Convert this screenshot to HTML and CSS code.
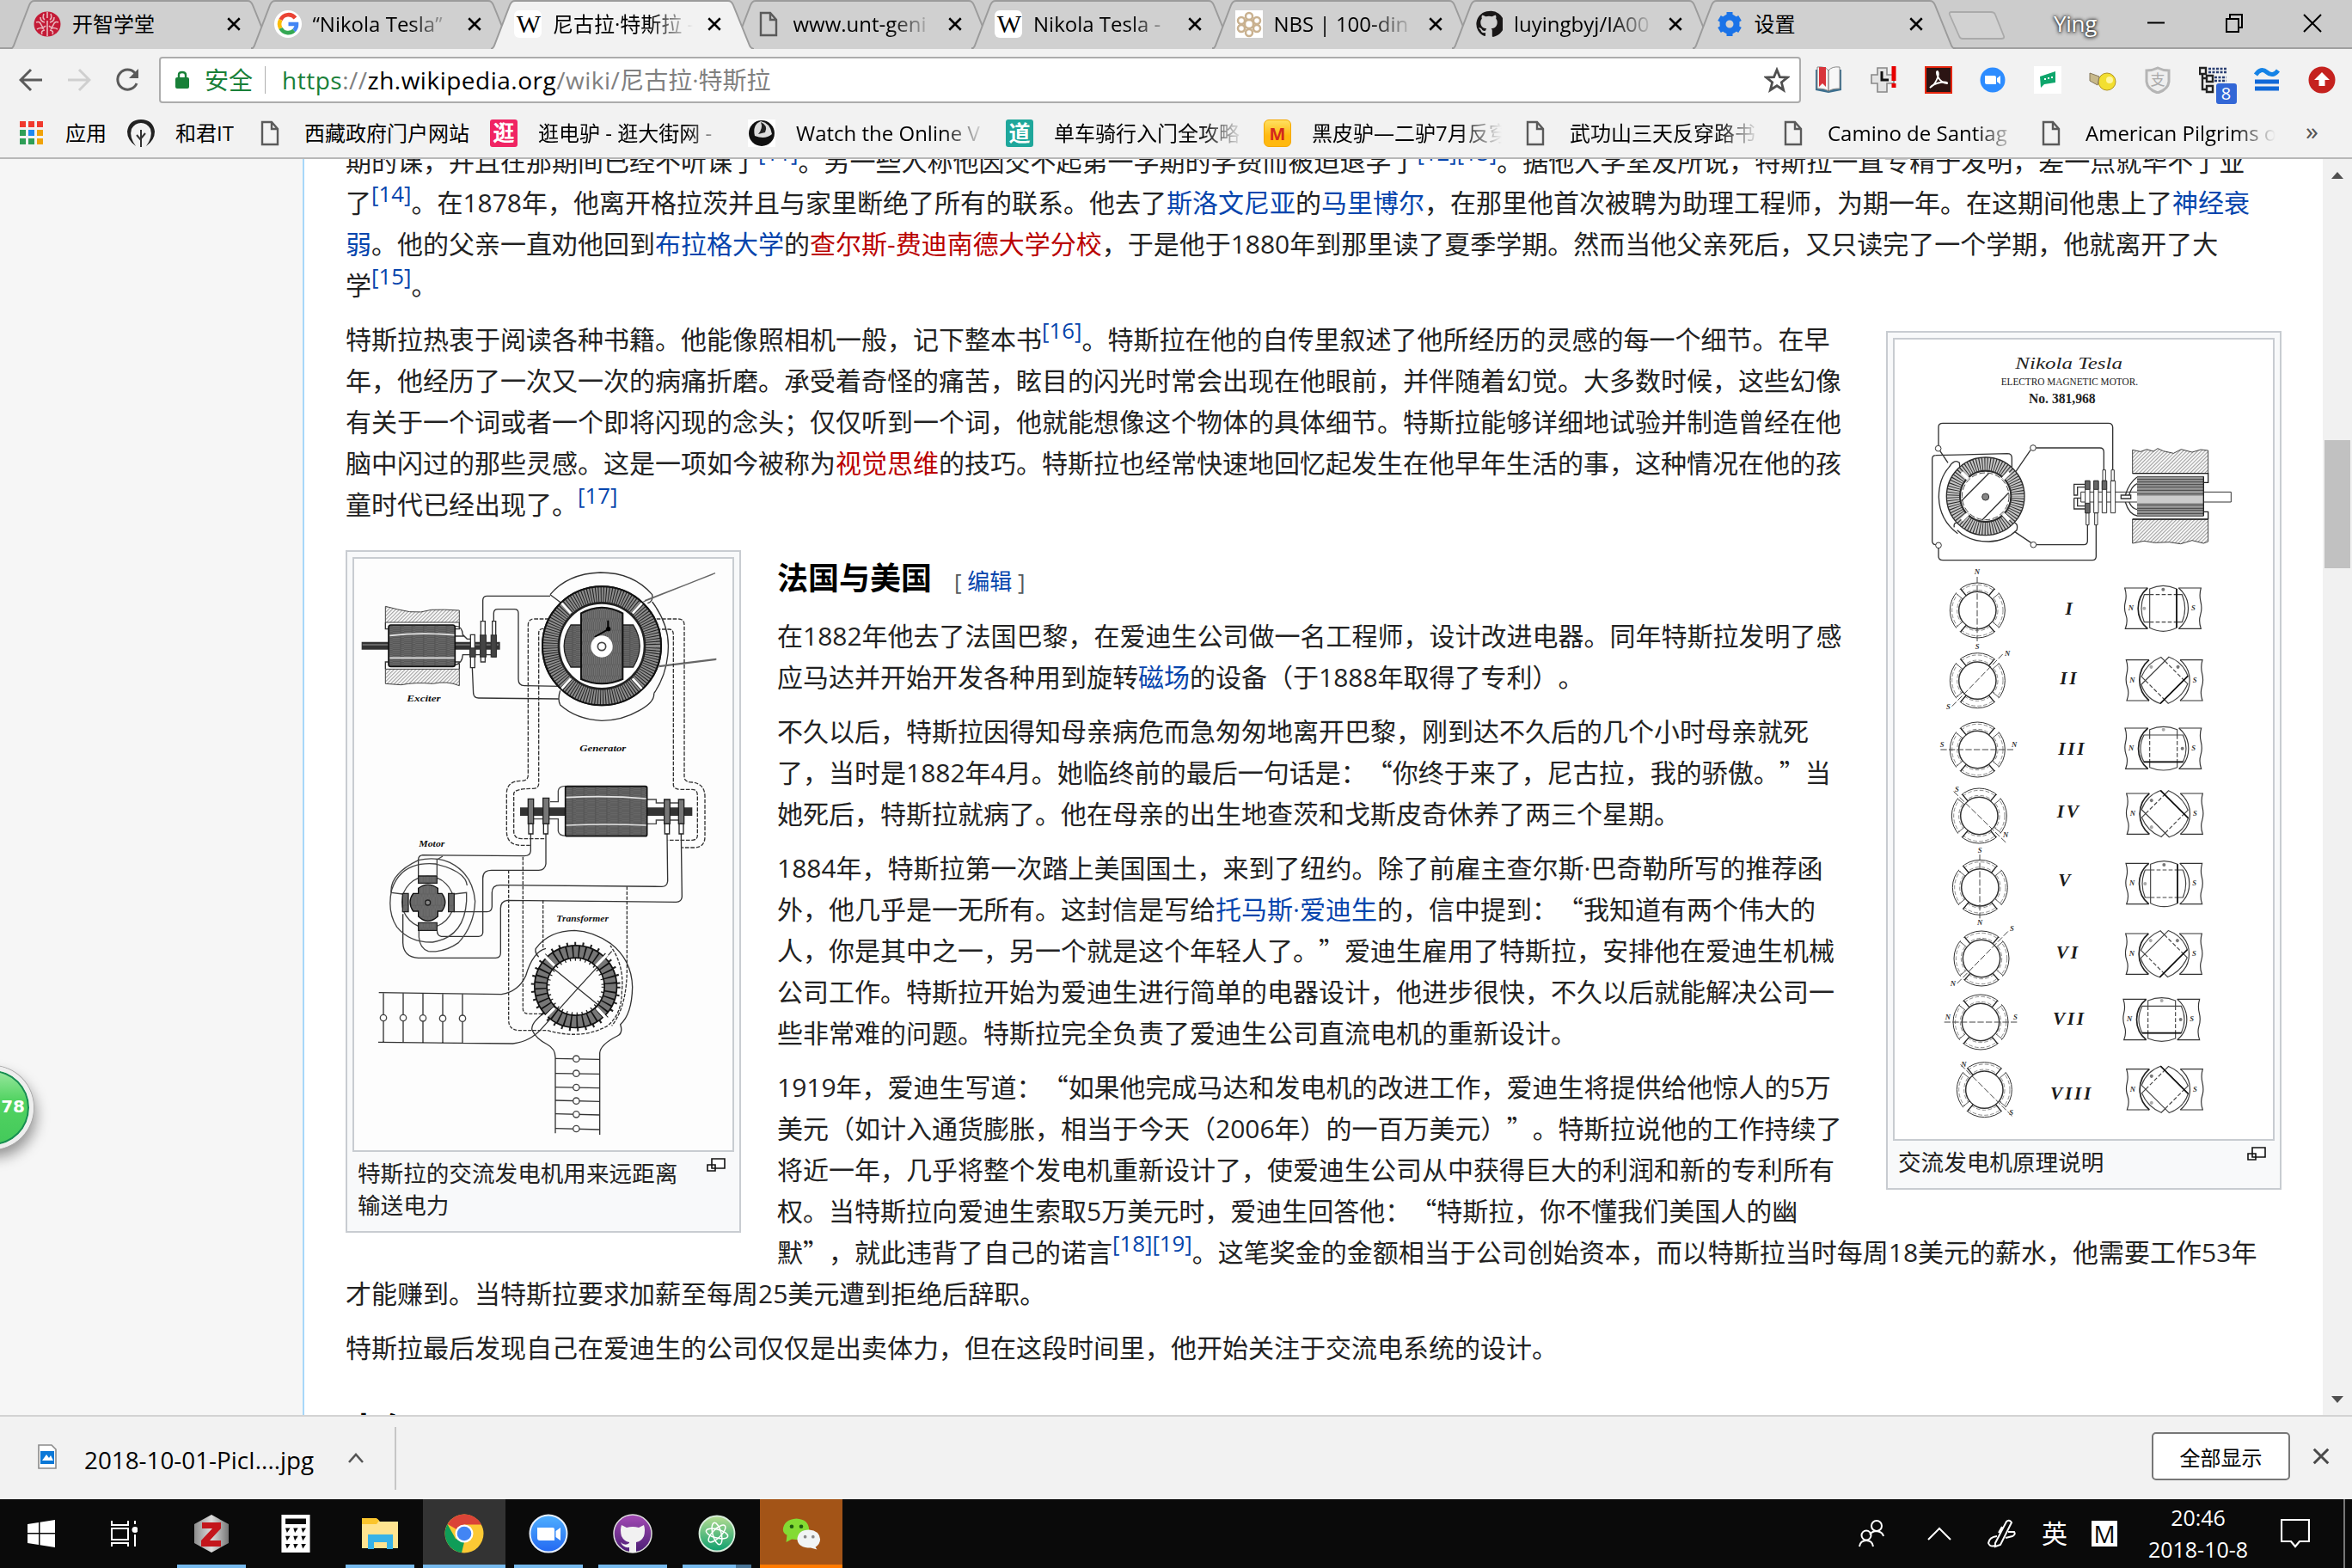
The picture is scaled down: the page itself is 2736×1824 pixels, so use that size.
FILE: index.html
```html
<!DOCTYPE html>
<html lang="zh-CN">
<head>
<meta charset="utf-8">
<title>尼古拉·特斯拉</title>
<link rel="stylesheet" href="styles.css">
</head>
<body>
<svg class="defs" width="0" height="0" aria-hidden="true">
  <defs>
    <symbol id="tab-shape" viewBox="0 0 306 57"><path d="M0 57Q3 56 4 53L22 6Q24 1 28 1H276Q280 1 282 6L301 53Q302 56 306 57" stroke="#9b9b9b" stroke-width="2"/></symbol>
    <symbol id="x" viewBox="0 0 16 16"><path d="M2 2L14 14M14 2L2 14" stroke="currentColor" stroke-width="2.2" fill="none"/></symbol>
    <symbol id="file" viewBox="0 0 32 32"><path d="M7 3H18L25 11V29H7ZM18 3V11H25" fill="none" stroke="#5a5a5a" stroke-width="2.4"/></symbol>
    <symbol id="magnify" viewBox="0 0 22 16"><path d="M6 1H21V12H6ZM1 8H10V15H1Z" fill="#fff" stroke="#111" stroke-width="1.6"/></symbol>
    <pattern id="hatch" width="9" height="9" patternUnits="userSpaceOnUse" patternTransform="rotate(45)"><rect width="9" height="9" fill="#fff"/><path d="M2 0V9" stroke="#555" stroke-width="2"/></pattern>
    <pattern id="grain" width="40" height="7" patternUnits="userSpaceOnUse"><rect width="40" height="7" fill="#555"/><path d="M0 2H26M30 5H40" stroke="#8b8b8b" stroke-width="1.6"/></pattern>
    <pattern id="grainv" width="7" height="40" patternUnits="userSpaceOnUse"><rect width="7" height="40" fill="#5c5c5c"/><path d="M2 0V28M5 30V40" stroke="#999" stroke-width="1.6"/></pattern>
    <linearGradient id="zg" x2="0" y2="1"><stop offset="0" stop-color="#4fb0ff"/><stop offset="1" stop-color="#2468f2"/></linearGradient>
    <linearGradient id="pg" x2="0" y2="1"><stop offset="0" stop-color="#a44bb5"/><stop offset="1" stop-color="#4a1d74"/></linearGradient>
    <linearGradient id="ag" x2="0" y2="1"><stop offset="0" stop-color="#b6dd92"/><stop offset="1" stop-color="#0d9f6e"/></linearGradient>
    <linearGradient id="silver"><stop offset="0" stop-color="#8c8c8c"/><stop offset=".5" stop-color="#ddd"/><stop offset="1" stop-color="#777"/></linearGradient>
    <symbol id="octocat" viewBox="0 0 32 32"><path d="M16 1a15 15 0 0 0-5 29c.9.1 1-.4 1-.9v-3c-4 1-5-1.600-5.200-2.400-.4-.9-1-1.800-1.800-2.300-.6-.4-1.400-1.100 0-1.100 1.400 0 2.300 1.200 2.700 1.800 1.500 2.500 3.700 1.900 4.500 1.400.1-1.100.6-1.800 1.100-2.300-3.500-.4-7-1.700-7-7.400 0-1.700.6-3 1.600-4.100-.2-.4-.7-2 .1-4 0 0 1.300-.4 4.200 1.500a14.500 14.500 0 0 1 7.600 0c2.900-1.900 4.200-1.500 4.200-1.500.8 2 .3 3.600.1 4 1 1.100 1.600 2.400 1.600 4.100 0 5.700-3.500 7-7 7.400.6.500 1.100 1.400 1.100 2.800v6.100c0 .5.200 1 1.100.9A15 15 0 0 0 16 1Z"/></symbol>
    <symbol id="ring" viewBox="-110 -110 220 220" overflow="visible">
      <g fill="none" stroke="#333" stroke-width="3"><circle r="96"/><circle r="65" stroke-width="4.500"/></g>
      <g fill="none" stroke="#777" stroke-width="2.500" stroke-dasharray="14 7"><circle r="89"/><circle r="71"/></g>
      <g stroke="#fff" stroke-width="16"><path d="M47 47L74 74M-47 47L-74 74M47-47L74-74M-47-47L-74-74"/></g>
      <g stroke="#222" stroke-width="4"><path d="M40 52L59 75M-40 52L-59 75M40-52L59-75M-40-52L-59-75"/></g>
      <g stroke="#555" stroke-width="3"><path d="M52 40L75 59M-52 40L-75 59M52-40L75-59M-52-40L-75-59"/></g>
    </symbol>
    <symbol id="poles" viewBox="-140 -90 280 180" overflow="visible">
      <g fill="none" stroke="#333" stroke-width="3.500"><path d="M-54-71H-134q8 24 2 48t2 46t-2 48H-54M54-71H132q-7 24-1 48t-1 46t2 48H54" /><path d="M-54-71A92 92 0 0 0-54 71" stroke="#222" stroke-width="5"/><path d="M54-71A92 92 0 0 1 54 71"/></g>
      <g class="italic"><text x="-122" y="7">N</text><text x="98" y="7">S</text></g>
    </symbol>
    <symbol id="rotor" viewBox="-90 -90 180 180" overflow="visible">
      <g fill="none" stroke="#444" stroke-width="3.500"><path d="M-47-68V68Q0 92 47 68V-68Q0-90-47-68Z"/><path d="M-47-48H-66Q-86 0-66 48H-47M47-48H66Q86 0 66 48H47"/><path d="M-47-48H47M-47 48H47" stroke-dasharray="14 7"/><path d="M47-68V68" stroke="#111" stroke-width="5"/></g><circle cy="-66" r="6" fill="#777"/><circle cx="-66" r="6" fill="#aaa"/>
    </symbol>
  </defs>
</svg>

<div class="screen">
  <header class="tabs">
    <div class="tab"><svg class="shape"><use href="#tab-shape"/></svg><svg class="fav" viewBox="0 0 32 32"><ellipse cx="16" cy="16" rx="15.500" ry="14.500" fill="#c41a36"/><path d="M16 2V9M16 12V30M12 4q-2 5 1 7M20 4q2 5-1 7M8 8q0 5 5 6M24 8q0 5-5 6M3 14q4-2 6 3t5 1M29 14q-4-2-6 3t-5 1M4 22q5-3 8 0M28 22q-5-3-8 0M10 28q-2-4 3-5M22 28q2-4-3-5" stroke="#e9b7bd" stroke-width="1.600" fill="none"/></svg><span class="label">开智学堂</span><svg class="close"><use href="#x"/></svg></div>
    <div class="tab"><svg class="shape"><use href="#tab-shape"/></svg><svg class="fav" viewBox="0 0 32 32"><circle cx="16" cy="16" r="16" fill="#fff"/><g fill="none" stroke-width="4.600"><path d="M24.500 9A10 10 0 0 0 7.500 11" stroke="#ea4335"/><path d="M7.500 11A10 10 0 0 0 7.500 21" stroke="#fbbc05"/><path d="M7.500 21A10 10 0 0 0 23 23.500" stroke="#34a853"/><path d="M23 23.500A10 10 0 0 0 26 16H16.500" stroke="#4285f4"/></g></svg><span class="label fade">“Nikola Tesla”</span><svg class="close"><use href="#x"/></svg></div>
    <div class="tab active"><svg class="shape"><use href="#tab-shape"/></svg><span class="fav wiki">W</span><span class="label fade">尼古拉·特斯拉 -</span><svg class="close"><use href="#x"/></svg></div>
    <div class="tab"><svg class="shape"><use href="#tab-shape"/></svg><svg class="fav"><use href="#file"/></svg><span class="label fade">www.unt-geni</span><svg class="close"><use href="#x"/></svg></div>
    <div class="tab"><svg class="shape"><use href="#tab-shape"/></svg><span class="fav wiki">W</span><span class="label fade">Nikola Tesla -</span><svg class="close"><use href="#x"/></svg></div>
    <div class="tab"><svg class="shape"><use href="#tab-shape"/></svg><svg class="fav" viewBox="0 0 32 32"><path d="M0 0H32V32H0Z" fill="#fff"/><g fill="none" stroke="#c9b18f" stroke-width="2.500"><circle cx="16" cy="7" r="4"/><circle cx="7" cy="12" r="4"/><circle cx="25" cy="12" r="4"/><circle cx="7" cy="21" r="4"/><circle cx="25" cy="21" r="4"/><circle cx="16" cy="16" r="5"/><circle cx="16" cy="26" r="4"/></g></svg><span class="label fade">NBS | 100-din</span><svg class="close"><use href="#x"/></svg></div>
    <div class="tab"><svg class="shape"><use href="#tab-shape"/></svg><svg class="fav" fill="#191717"><use href="#octocat"/></svg><span class="label fade">luyingbyj/IA00</span><svg class="close"><use href="#x"/></svg></div>
    <div class="tab"><svg class="shape"><use href="#tab-shape"/></svg><svg class="fav" viewBox="0 0 32 32"><circle cx="16" cy="16" r="8" fill="none" stroke="#1a73e8" stroke-width="7"/><path d="M16 2V8M16 24V30M4 9L9 12M23 20L28 23M4 23L9 20M23 12L28 9" stroke="#1a73e8" stroke-width="7"/></svg><span class="label">设置</span><svg class="close"><use href="#x"/></svg></div>
    <svg class="newtab" viewBox="0 0 68 34"><path d="M4 1H50Q54 1 55 4L65 29Q66 32 62 32H17Q14 32 13 29L2 4Q1 1 4 1Z" fill="#d2d2d2" stroke="#aaa" stroke-width="1.800"/></svg>
    <div class="window">
      <span class="profile">Ying</span>
      <svg viewBox="0 0 22 22"><path d="M1 10.500H21" /></svg>
      <svg viewBox="0 0 22 22"><path d="M2 6H16V21H2ZM6 6V1H20V16H16"/></svg>
      <svg viewBox="0 0 22 22"><path d="M1 1L21 21M21 1L1 21"/></svg>
    </div>
  </header>

  <div class="toolbar">
    <nav class="nav">
      <svg viewBox="0 0 28 28"><path d="M27 14H3M14 2L2 14L14 26" stroke="#5a5a5a"/></svg>
      <svg viewBox="0 0 28 28"><path d="M1 14H25M14 2L26 14L14 26" stroke="#cfcfcf"/></svg>
      <svg viewBox="0 0 28 28"><path d="M23 6A11.500 11.500 0 1 0 25 18" stroke="#5a5a5a"/><path d="M27 1V12H16Z" fill="#5a5a5a"/></svg>
    </nav>
    <div class="omnibox">
      <svg class="lock" viewBox="0 0 16 22"><path d="M4 9V5Q4 2 8 2T12 5V9" fill="none" stroke="#188038" stroke-width="2.400"/><rect y="8" width="16" height="13" rx="2" fill="#188038"/></svg>
      <span class="secure">安全</span>
      <span class="url"><b>https</b>://<i>zh.wikipedia.org</i>/wiki/<span>尼古拉·特斯拉</span></span>
      <svg class="star" viewBox="0 0 28 28"><path d="M14 3L17.200 10.800L25.500 11.300L19 16.600L21.200 25L14 20.300L6.800 25L9 16.600L2.500 11.300L10.800 10.800Z" fill="none" stroke="#4f4f4f" stroke-width="2.600"/></svg>
    </div>
    <div class="exts">
      <svg viewBox="0 0 32 32"><path d="M1 4V28L16 31L31 28V4Z" fill="#3c6f8e"/><path d="M3 1Q12 0 16 5Q20 0 29 1V26Q20 26 16 29Q12 26 3 26Z" fill="#f7f7f7" stroke="#888"/><path d="M5 1H13V24L9 20L5 24Z" fill="#d8343b"/><path d="M16 5V29" stroke="#555"/></svg>
      <svg viewBox="0 0 32 32"><path d="M9 2H20V10H28V20H20V30H9V20H2V10H9Z" fill="#e4e4e4" stroke="#888" stroke-width="1.600"/><path d="M14 6V16H22" stroke="#111" stroke-width="3" fill="none"/><path d="M28 0V17M28 20V25" stroke="#e60000" stroke-width="5"/></svg>
      <svg viewBox="0 0 32 32"><path d="M1 1H31V31H1Z" fill="#2b1413" stroke="#e6250d" stroke-width="2"/><path d="M6 25C12 22 18 10 15 6C12 5 15 19 26 20C28 17 12 18 6 25Z" fill="none" stroke="#fff" stroke-width="1.800"/></svg>
      <svg viewBox="0 0 32 32"><circle cx="16" cy="16" r="14.500" fill="#2d8cff"/><path d="M7 11H18Q20 11 20 13V21H9Q7 21 7 19ZM21 14L25 11V21L21 18Z" fill="#fff"/></svg>
      <svg viewBox="0 0 32 32"><path d="M0 0H32V32H0Z" fill="#fff"/><path d="M7 12L25 6V19L12 21L8 25Z" fill="#0fa66c"/><path d="M12 15h2M16 14h2M20 13h2" stroke="#fff" stroke-width="2"/></svg>
      <svg viewBox="0 0 32 32"><circle cx="21" cy="18" r="10" fill="#f3df30" stroke="#b29522"/><path d="M1 8L12 12L10 22L1 17Z" fill="#c8b98a" stroke="#85775a"/><circle cx="24" cy="16" r="4" fill="#fff6a0"/></svg>
      <svg viewBox="0 0 32 32"><path d="M16 2Q22 5 29 5V18Q28 27 16 31Q4 27 3 18V5Q10 5 16 2Z" fill="#eee" stroke="#b5b5b5" stroke-width="3"/><text x="16" y="22" class="shield">支</text></svg>
      <div class="tree"><svg viewBox="0 0 32 32"><path d="M1 2H8V9H1ZM9 11H16V18H9ZM9 23H16V30H9ZM4 9V27H9M4 14H9" fill="none" stroke="#222" stroke-width="2.400"/><path d="M11 3H32M11 7H32M18 13H32M18 17H32" stroke="#2a3f72" stroke-width="2.600" stroke-dasharray="3 1.500"/></svg><span>8</span></div>
      <svg viewBox="0 0 32 32"><path d="M3 10Q9 1 16 7T29 5" fill="none" stroke="#1583e6" stroke-width="5"/><path d="M2 18H30M2 26H30" stroke="#1069d8" stroke-width="5"/></svg>
      <svg viewBox="0 0 32 32"><circle cx="16" cy="16" r="15.500" fill="#c5221f"/><path d="M16 7L25 16H19.500V23H12.500V16H7Z" fill="#fff"/></svg>
    </div>
  </div>

  <div class="bookmarks">
    <div class="bm apps"><svg viewBox="0 0 27 27"><path d="M0 0h7v7h-7zM10 0h7v7h-7zM20 0h7v7h-7z" fill="#f03a2e"/><path d="M0 10h7v7h-7zM0 20h7v7h-7zM10 20h7v7h-7z" fill="#2e9e56"/><path d="M10 10h7v7h-7z" fill="#1e88f0"/><path d="M20 10h7v7h-7zM20 20h7v7h-7z" fill="#f0a30a"/></svg><span>应用</span></div>
    <div class="bm short"><svg viewBox="0 0 32 32"><path d="M10 31Q0 24 0 14Q2 0 16 0T32 14Q32 24 22 31Q30 20 27 11Q23 4 16 4T5 11Q2 20 10 31Z" fill="#222"/><path d="M16 12V32M16 24L11 18M16 22L21 16" stroke="#333" stroke-width="2"/></svg><span>和君IT</span></div>
    <div class="bm mid"><svg><use href="#file"/></svg><span>西藏政府门户网站</span></div>
    <div class="bm"><span class="sq pink">逛</span><span class="fade">逛电驴 - 逛大街网 -</span></div>
    <div class="bm"><svg viewBox="0 0 32 32"><path d="M0 0H32V32H0Z" fill="#fff"/><circle cx="16" cy="16" r="15" fill="#111"/><path d="M8 19Q5 6 15 2Q26 4 28 17Q20 24 8 19Z" fill="#ddd"/><path d="M15 3Q24 7 20 15L12 17Q18 10 15 3" fill="#222"/></svg><span class="fade">Watch the Online V</span></div>
    <div class="bm"><span class="sq teal">道</span><span class="fade">单车骑行入门全攻略</span></div>
    <div class="bm"><span class="sq gold">M</span><span class="fade">黑皮驴—二驴7月反穿</span></div>
    <div class="bm"><svg><use href="#file"/></svg><span class="fade">武功山三天反穿路书</span></div>
    <div class="bm"><svg><use href="#file"/></svg><span class="fade">Camino de Santiag</span></div>
    <div class="bm last"><svg><use href="#file"/></svg><span class="fade">American Pilgrims o</span></div>
    <span class="more">»</span>
  </div>

  <main class="viewport">
    <aside class="margin"></aside>
    <article class="article">
      <p>期的课，并且在那期间已经不听课了<sup>[11]</sup>。另一些人称他因交不起第一学期的学费而被迫退学了<sup>[12][13]</sup>。据他大学室友所说，特斯拉一直专精于发明，差一点就毕不了业<br>了<sup>[14]</sup>。在1878年，他离开格拉茨并且与家里断绝了所有的联系。他去了<a>斯洛文尼亚</a>的<a>马里博尔</a>，在那里他首次被聘为助理工程师，为期一年。在这期间他患上了<a>神经衰<br>弱</a>。他的父亲一直劝他回到<a>布拉格大学</a>的<a class="new">查尔斯-费迪南德大学分校</a>，于是他于1880年到那里读了夏季学期。然而当他父亲死后，又只读完了一个学期，他就离开了大<br>学<sup>[15]</sup>。</p>
      <figure class="thumb right">
        <svg class="plate motor" viewBox="72 75 1320 2790">
          <g fill="#222" font-family="Liberation Serif, serif">
            <text x="493" y="176" font-size="56" font-style="italic" textLength="374" lengthAdjust="spacingAndGlyphs">Nikola Tesla</text>
            <text x="443" y="235" font-size="38" textLength="478" lengthAdjust="spacingAndGlyphs">ELECTRO MAGNETIC MOTOR.</text>
            <text x="540" y="297" font-size="48" font-weight="bold" textLength="233" lengthAdjust="spacingAndGlyphs">No. 381,968</text>
          </g>
          <g fill="none" stroke="#333" stroke-width="4">
            <path d="M225 445V380Q225 367 240 367H818Q833 367 833 382V530M565 453H788Q802 453 802 468V530M567 791H732Q745 791 745 778V720M225 803V832Q225 845 240 845H762Q775 845 775 832V720M216 791Q203 791 203 778V492Q203 479 216 479L465 473Q481 473 481 488V520M230 463L258 505M546 461L495 535M548 784L490 745"/>
            <path d="M262 520Q226 560 226 625Q228 705 292 752M290 740Q330 780 400 780Q460 778 498 740Q505 715 484 712M262 520Q280 490 298 505L300 530M280 730Q276 712 295 714"/>
            <g fill="#fff" stroke-width="3"><circle cx="224" cy="455" r="10"/><circle cx="555" cy="453" r="10"/><circle cx="225" cy="793" r="10"/><circle cx="556" cy="791" r="10"/></g>
          </g>
          <circle cx="389" cy="622" r="112" fill="#fff" stroke="#2c2c2c" stroke-width="52"/><circle cx="389" cy="622" r="113" fill="none" stroke="#c4c4c4" stroke-width="42" stroke-dasharray="6 3"/>
          <path d="M306 539L328 561M472 539L450 561M306 705L328 683M472 705L450 683" stroke="#fff" stroke-width="12"/>
          <circle cx="389" cy="622" r="82" fill="none" stroke="#444" stroke-width="3" stroke-dasharray="20 8"/>
          <path d="M305 638L400 542M378 704L470 610" stroke="#333" stroke-width="4"/><circle cx="389" cy="624" r="12" fill="#888" stroke="#333" stroke-width="3"/>
          <path d="M902 460L930 466L952 458L975 465L990 455L1010 464L1045 472L1072 458L1110 468L1140 459L1166 462V542H902ZM902 702H1166V780L1150 786L1110 776L1070 788L1030 782L980 784L942 778L902 786Z" fill="url(#hatch)" stroke="#444" stroke-width="3"/>
          <path d="M902 702H1166M902 542H1166V574H1148M1148 676H1166V702" fill="none" stroke="#222" stroke-width="4"/>
          <path d="M722 607H1246V642H722Z" fill="#fff" stroke="#333" stroke-width="3"/>
          <path d="M918 553H1150V691H918Z" fill="#969696"/><path d="M918 553H1150M918 563H1150M918 572H1150M918 581H1150M918 590H1150M918 601H1150M918 614H1150M918 652H1150M918 664H1150M918 671H1150M918 682H1150M918 691H1150" stroke="#444" stroke-width="3"/><path d="M918 620H1150V646H918Z" fill="#ccc"/><path d="M1150 553V691" stroke="#222" stroke-width="4"/>
          <path d="M918 555Q890 575 877 618H890Q900 585 918 578M877 642Q890 685 918 690M890 642Q900 665 918 668M862 618H896V630H862ZM750 580H698V618H710V590H750M698 628V666H742M710 628V656H742M698 628H722" fill="none" stroke="#333" stroke-width="4"/>
          <g fill="#fff" stroke="#333" stroke-width="3"><path d="M737 568H753V680H737ZM767 568H783V680H767ZM796 568H812V680H796ZM826 568H842V680H826ZM798 530H808V568H798ZM828 530H838V568H828ZM740 680H750V722H740ZM770 680H780V722H770Z"/><path d="M737 568H753V598H737ZM767 568H783V598H767ZM796 568H812V598H796ZM737 646H753V680H737Z" fill="#666"/></g>

          <g><use href="#ring" x="251" y="910" width="220" height="220"/><use href="#ring" x="251" y="1155" width="220" height="220"/><use href="#ring" x="251" y="1396" width="220" height="220"/><use href="#ring" x="257" y="1627" width="220" height="220"/><use href="#ring" x="260" y="1877" width="220" height="220"/><use href="#ring" x="265" y="2125" width="220" height="220"/><use href="#ring" x="262" y="2347" width="220" height="220"/><use href="#ring" x="275" y="2583" width="220" height="220"/></g>
          <path d="M360 903V1130M272 1355L450 1172M232 1506H492M278 1652L462 1832M369 1872V2095M290 2322L468 2140M245 2457H500M302 2605L482 2785" stroke="#444" stroke-width="3" stroke-dasharray="22 7"/>
          <g class="italic"><text x="350" y="893">N</text><text x="353" y="1155">S</text><text x="456" y="1180">N</text><text x="252" y="1366">S</text><text x="230" y="1497">S</text><text x="480" y="1497">N</text><text x="282" y="1653">S</text><text x="450" y="1812">N</text><text x="362" y="1866">S</text><text x="360" y="2118">N</text><text x="474" y="2140">S</text><text x="266" y="2330">N</text><text x="248" y="2449">N</text><text x="486" y="2449">S</text><text x="304" y="2612">N</text><text x="472" y="2780">S</text></g>
          <g class="roman"><text x="684" y="1035">I</text><text x="682" y="1277">II</text><text x="692" y="1524">III</text><text x="680" y="1744">IV</text><text x="668" y="1984">V</text><text x="677" y="2234">VI</text><text x="682" y="2465">VII</text><text x="690" y="2726">VIII</text></g>
          <g><use href="#poles" x="869" y="923" width="280" height="180"/><use href="#poles" x="874" y="1174" width="280" height="180"/><use href="#poles" x="870" y="1412" width="280" height="180"/><use href="#poles" x="875" y="1640" width="280" height="180"/><use href="#poles" x="873" y="1884" width="280" height="180"/><use href="#poles" x="872" y="2129" width="280" height="180"/><use href="#poles" x="864" y="2358" width="280" height="180"/><use href="#poles" x="875" y="2602" width="280" height="180"/></g>
          <g><use href="#rotor" x="919" y="923" width="180" height="180"/><g transform="translate(1014 1264) rotate(45)"><use href="#rotor" x="-90" y="-90" width="180" height="180"/></g><g transform="translate(1010 1502) rotate(90)"><use href="#rotor" x="-90" y="-90" width="180" height="180"/></g><g transform="translate(1015 1730) rotate(-45)"><use href="#rotor" x="-90" y="-90" width="180" height="180"/></g><use href="#rotor" x="922" y="1884" width="180" height="180"/><g transform="translate(1012 2219) rotate(45)"><use href="#rotor" x="-90" y="-90" width="180" height="180"/></g><g transform="translate(1004 2448) rotate(90)"><use href="#rotor" x="-90" y="-90" width="180" height="180"/></g><g transform="translate(1015 2692) rotate(-45)"><use href="#rotor" x="-90" y="-90" width="180" height="180"/></g></g>
        </svg>
        <figcaption><span>交流发电机原理说明</span><svg><use href="#magnify"/></svg></figcaption>
      </figure>
      <p>特斯拉热衷于阅读各种书籍。他能像照相机一般，记下整本书<sup>[16]</sup>。特斯拉在他的自传里叙述了他所经历的灵感的每一个细节。在早<br>年，他经历了一次又一次的病痛折磨。承受着奇怪的痛苦，眩目的闪光时常会出现在他眼前，并伴随着幻觉。大多数时候，这些幻像<br>有关于一个词或者一个即将闪现的念头；仅仅听到一个词，他就能想像这个物体的具体细节。特斯拉能够详细地试验并制造曾经在他<br>脑中闪过的那些灵感。这是一项如今被称为<a class="new">视觉思维</a>的技巧。特斯拉也经常快速地回忆起发生在他早年生活的事，这种情况在他的孩<br>童时代已经出现了。<sup>[17]</sup></p>
      <figure class="thumb left">
        <svg class="plate system" viewBox="66 60 1320 2064">
          <g fill="none" stroke="#333" stroke-width="4">
            <path d="M515 280V205Q515 190 530 190H750M553 280V250Q553 236 568 236H625Q639 236 639 250V480Q639 503 660 503L790 505M478 438L482 530Q484 546 500 546L780 549M750 185Q810 112 925 108Q1040 108 1106 185Q1110 210 1090 215M750 185L790 215M1106 210Q1165 290 1162 370Q1160 460 1112 530M1112 530Q1115 560 1060 590Q1000 625 930 625Q840 620 785 570Q775 550 785 520"/>
            <path d="M1075 210L1326 110M1080 206L1318 114M1130 434L1330 409M1130 437L1330 412" stroke="#666"/>
            <path d="M860 270H695Q673 270 673 292V815Q673 835 650 835Q598 835 598 880V1010Q598 1060 650 1060H680M860 304H725Q710 304 710 320V845Q710 862 690 862Q623 862 623 880V1010Q623 1037 650 1037H735M950 270H1195Q1218 270 1218 290V825Q1222 840 1245 840Q1290 845 1290 890V1030Q1290 1068 1250 1068H1210M950 306H1165Q1180 306 1180 325V850Q1182 865 1205 865H1245Q1264 865 1264 885V1025Q1264 1042 1245 1042H1160" stroke-dasharray="14 5"/>
            <path d="M682 1020V1080Q680 1097 660 1097L305 1094Q290 1096 290 1110V1170M735 1020V1125Q732 1147 710 1147H545Q515 1147 515 1175V1365Q513 1378 500 1378H370Q355 1375 355 1355M1158 1020L1160 1185Q1158 1204 1140 1204L575 1199Q547 1199 547 1225V1275Q545 1292 530 1292H415M1207 1020L1210 1240Q1208 1257 1190 1258L600 1252Q577 1255 577 1280V1435Q577 1453 560 1453H290Q238 1450 236 1400V1300"/>
            <path d="M605 1147V1670Q605 1706 645 1706H740Q860 1740 950 1690Q1000 1650 1000 1570Q1010 1480 960 1410M655 1100V1630Q655 1648 675 1648H720M725 1252V1420M1018 1204V1480Q1020 1620 965 1690" stroke-dasharray="12 5"/>
          </g>
          <path d="M175 226Q220 238 260 245Q300 250 335 238Q380 236 433 240V282H175ZM175 445H433V503Q390 485 340 496Q280 490 230 500L175 496Z" fill="url(#hatch)" stroke="#444" stroke-width="3"/>
          <path d="M175 282V305H185M433 282V305H420M175 445V420H185M433 445V420H420M420 295Q443 295 445 325L460 340H475M420 430Q443 425 445 395H560M420 330H450" fill="none" stroke="#333" stroke-width="4"/>
          <path d="M92 350H575V377H92Z" fill="#333"/><path d="M95 360H570" stroke="#999" stroke-width="3"/>
          <rect x="186" y="291" width="232" height="145" rx="8" fill="url(#grain)" stroke="#111" stroke-width="5"/><path d="M190 328Q300 316 415 326M190 406H415" stroke="#e5e5e5" stroke-width="5" fill="none"/>
          <g fill="#fff" stroke="#333" stroke-width="4"><path d="M472 325H487V440H472ZM508 278H523V420H508ZM548 278H560V402H548Z"/><path d="M470 372H489V402H470ZM506 327H526V402H506ZM544 327H562V402H544Z" fill="#444"/></g>
          <circle cx="930" cy="364" r="178" fill="#fff" stroke="#222" stroke-width="64"/><circle cx="930" cy="364" r="180" fill="none" stroke="#8c8c8c" stroke-width="52" stroke-dasharray="6 3"/><circle cx="930" cy="364" r="207" fill="none" stroke="#111" stroke-width="6"/>
          <path d="M790 215L822 250M1070 215L1038 250M790 513L822 478M1070 513L1038 478" stroke="#fff" stroke-width="8"/>
          <path d="M822 291H1040Q1085 364 1040 438H822Q775 364 822 291Z" fill="url(#grain)" stroke="#222" stroke-width="4"/>
          <path d="M858 250Q930 210 1003 250V480Q930 512 858 480Z" fill="url(#grainv)" stroke="#111" stroke-width="6"/>
          <path d="M905 333L955 305M952 275V305" stroke="#000" stroke-width="6"/><circle cx="953" cy="305" r="8"/><circle cx="930" cy="366" r="38" fill="#fff"/><circle cx="930" cy="366" r="14" fill="#fff" stroke="#444" stroke-width="5"/>
          <path d="M645 928H1246V957H645Z" fill="#333"/><path d="M750 908H778V870Q780 853 805 853M690 968H778V1010Q780 1027 805 1027M1088 900H1120V912H1200M1088 985H1120V972H1200" fill="none" stroke="#444" stroke-width="4"/>
          <rect x="803" y="854" width="285" height="174" rx="6" fill="url(#grain)" stroke="#111" stroke-width="5"/><path d="M806 893Q950 885 1085 897M806 990Q950 984 1085 990" stroke="#e5e5e5" stroke-width="5" fill="none"/>
          <g fill="#777" stroke="#222" stroke-width="4"><path d="M673 898H692V985H673ZM725 895H746V985H725ZM1148 900H1168V985H1148ZM1198 900H1217V985H1198Z"/><path d="M675 985H690V1020H675ZM727 985H742V1020H727ZM1150 985H1166V1020H1150ZM1200 985H1215V1020H1200Z" fill="#fff"/></g>
          <g fill="none" stroke="#444" stroke-width="4"><circle cx="323" cy="1258" r="90"/><path d="M195 1225Q190 1160 290 1112Q350 1098 400 1120Q480 1160 488 1255Q485 1340 430 1400Q380 1435 325 1430Q295 1420 292 1380V1340M195 1225L235 1230"/><path d="M460 1200Q455 1150 350 1125Q230 1115 197 1215Q180 1290 215 1345Q260 1400 340 1398Q450 1380 458 1255V1225L415 1230"/><path d="M355 1165V1110L375 1098"/></g>
          <path d="M290 1167H355V1192H290ZM290 1330H355V1357H290ZM235 1228H255V1292H235ZM395 1228H415V1292H395Z" fill="url(#grainv)" stroke="#222" stroke-width="4"/>
          <path d="M290 1210Q323 1185 358 1210V1228H372Q395 1258 372 1290H358V1308Q323 1340 290 1308V1290H272Q250 1258 272 1228H290Z" fill="url(#grainv)" stroke="#111" stroke-width="4"/><circle cx="323" cy="1260" r="9" fill="#888" stroke="#222" stroke-width="4"/>
          <g fill="none" stroke="#333" stroke-width="4"><path d="M152 1574L580 1580Q640 1570 665 1515Q690 1430 735 1420M150 1747L620 1752Q680 1745 720 1700L850 1555L965 1430M168 1575V1747M237 1575V1747M306 1578V1750M375 1578V1750M444 1580V1750M700 1420Q745 1358 835 1357Q900 1360 960 1402Q1035 1460 1037 1555Q1035 1650 995 1685Q1005 1715 985 1725Q925 1755 923 1785V2070M700 1420Q695 1435 710 1450M735 1640Q680 1680 687 1705Q700 1735 740 1755Q768 1770 768 1800V2065M755 1485L940 1635"/><path d="M768 1804L923 1807M768 1856L923 1858M768 1904L923 1907M768 1950L923 1954M768 1997L923 2001M768 2048L923 2052"/></g>
          <g fill="#fff" stroke="#444" stroke-width="4"><circle cx="168" cy="1662" r="11"/><circle cx="237" cy="1662" r="11"/><circle cx="306" cy="1663" r="11"/><circle cx="375" cy="1664" r="11"/><circle cx="444" cy="1664" r="11"/><circle cx="841" cy="1805" r="11"/><circle cx="841" cy="1856" r="11"/><circle cx="841" cy="1905" r="11"/><circle cx="841" cy="1952" r="11"/><circle cx="841" cy="1999" r="11"/><circle cx="841" cy="2049" r="11"/></g>
          <g fill="none"><circle cx="839" cy="1553" r="123" stroke="#222" stroke-width="66" stroke-dasharray="5 18"/><circle cx="839" cy="1553" r="122" stroke="#111" stroke-width="48"/><circle cx="839" cy="1553" r="122" stroke="#777" stroke-width="38" stroke-dasharray="16 5"/></g>
          <path d="M725 1440L765 1480M950 1440L910 1480M725 1668L765 1628M950 1668L912 1628" stroke="#fff" stroke-width="10"/>
          <g fill="#111" font-family="Liberation Serif, serif" font-style="italic" font-weight="bold" font-size="34"><text x="250" y="557" textLength="118" lengthAdjust="spacingAndGlyphs">Exciter</text><text x="853" y="733" textLength="162" lengthAdjust="spacingAndGlyphs">Generator</text><text x="292" y="1064" textLength="90" lengthAdjust="spacingAndGlyphs">Motor</text><text x="772" y="1325" textLength="182" lengthAdjust="spacingAndGlyphs">Transformer</text></g>
        </svg>
        <figcaption><span>特斯拉的交流发电机用来远距离<br>输送电力</span><svg><use href="#magnify"/></svg></figcaption>
      </figure>
      <h3>法国与美国<span class="edit">[ <a>编辑</a> ]</span></h3>
      <p>在1882年他去了法国巴黎，在爱迪生公司做一名工程师，设计改进电器。同年特斯拉发明了感<br>应马达并开始开发各种用到旋转<a>磁场</a>的设备（于1888年取得了专利）。</p>
      <p>不久以后，特斯拉因得知母亲病危而急匆匆地离开巴黎，刚到达不久后的几个小时母亲就死<br>了，当时是1882年4月。她临终前的最后一句话是：<q>“</q>你终于来了，尼古拉，我的骄傲。<q>”</q>当<br>她死后，特斯拉就病了。他在母亲的出生地查茨和戈斯皮奇休养了两三个星期。</p>
      <p>1884年，特斯拉第一次踏上美国国土，来到了纽约。除了前雇主查尔斯·巴奇勒所写的推荐函<br>外，他几乎是一无所有。这封信是写给<a>托马斯·爱迪生</a>的，信中提到：<q>“</q>我知道有两个伟大的<br>人，你是其中之一，另一个就是这个年轻人了。<q>”</q>爱迪生雇用了特斯拉，安排他在爱迪生机械<br>公司工作。特斯拉开始为爱迪生进行简单的电器设计，他进步很快，不久以后就能解决公司一<br>些非常难的问题。特斯拉完全负责了爱迪生公司直流电机的重新设计。</p>
      <p>1919年，爱迪生写道：<q>“</q>如果他完成马达和发电机的改进工作，爱迪生将提供给他惊人的5万<br>美元（如计入通货膨胀，相当于今天（2006年）的一百万美元）<q>”</q>。特斯拉说他的工作持续了<br>将近一年，几乎将整个发电机重新设计了，使爱迪生公司从中获得巨大的利润和新的专利所有<br>权。当特斯拉向爱迪生索取5万美元时，爱迪生回答他：<q>“</q>特斯拉，你不懂我们美国人的幽<br>默<q>”</q>，就此违背了自己的诺言<sup>[18][19]</sup>。这笔奖金的金额相当于公司创始资本，而以特斯拉当时每周18美元的薪水，他需要工作53年<br>才能赚到。当特斯拉要求加薪至每周25美元遭到拒绝后辞职。</p>
      <p>特斯拉最后发现自己在爱迪生的公司仅仅是出卖体力，但在这段时间里，他开始关注于交流电系统的设计。</p>
      <h3 class="next">中年</h3>
    </article>
    <div class="scroll"><svg viewBox="0 0 14 8"><path d="M0 8L7 0L14 8Z"/></svg><div class="thumbbar"></div><svg viewBox="0 0 14 8"><path d="M0 0L7 8L14 0Z"/></svg></div>
    <div class="ball">78</div>
  </main>

  <div class="shelf">
    <div class="download"><svg class="doc" viewBox="0 0 22 29"><path d="M1 1H16L21 6V28H1Z" fill="#fff" stroke="#8a8a8a" stroke-width="1.600"/><path d="M3 8H19V23H3Z" fill="#0b78d7"/><path d="M5 19L10 12L13 16L15 13L18 19" fill="#fff"/></svg><span>2018-10-01-PicI....jpg</span><svg class="caret" viewBox="0 0 20 12"><path d="M2 11L10 2L18 11" fill="none" stroke="#555" stroke-width="2.600"/></svg></div>
    <button>全部显示</button>
    <svg class="shut"><use href="#x"/></svg>
  </div>

  <footer class="taskbar">
    <div class="start"><svg viewBox="0 0 32 32"><path d="M0 5L13 3V15H0ZM14.500 2.700L32 0V15H14.500ZM0 16.500H13V29L0 27ZM14.500 16.500H32V32L14.500 29.300Z" fill="#fff"/></svg></div>
    <div class="start"><svg viewBox="0 0 32 32"><path d="M2 1V6H21V1M2 10H21V23H2ZM2 31V27H21V31M29 1V5M29 17V31" fill="none" stroke="#fff" stroke-width="2"/><circle cx="29" cy="11.500" r="3.500" fill="#fff"/></svg></div>
    <div class="app run"><svg viewBox="0 0 46 46"><path d="M23 1L43 12V34L23 45L3 34V12Z" fill="url(#silver)"/><path d="M12 10H34V17L21 31H34V38H11V31L24 17H12Z" fill="#c4161c"/></svg></div>
    <div class="app"><svg viewBox="0 0 46 50"><path d="M5 1H41V49H5Z" fill="#fff"/><path d="M10 6H36V13H10Z" fill="#0a0a0a"/><path d="M10 18h6l-4 6zM20 18h6l-4 6zM30 18h6l-4 6zM10 28h6l-4 6zM20 28h6l-4 6zM30 28h6l-4 6zM10 38h6l-4 6zM20 38h6l-4 6zM30 38h6l-4 6z" fill="#0a0a0a"/></svg></div>
    <div class="app run"><svg viewBox="0 0 46 46"><path d="M2 6H20L23 9H44V40H2Z" fill="#ffe490"/><path d="M2 5H19L22 8L19 12H2Z" fill="#fbc52d"/><path d="M9 24H38V41H31V33H16V41H9Z" fill="#39b3e7"/></svg></div>
    <div class="app run wide current"><svg viewBox="0 0 46 46"><circle cx="23" cy="23" r="22.500" fill="#fcc934"/><path d="M23 23L3.500 12A22.500 22.500 0 0 1 43 12.500H23Z" fill="#db4437"/><path d="M3.500 12L13 29L23 33L20 45.300A22.500 22.500 0 0 1 3.500 12Z" fill="#0f9d58"/><circle cx="23" cy="23" r="10.500" fill="#fff"/><circle cx="23" cy="23" r="8.300" fill="#4285f4"/></svg></div>
    <div class="app run"><svg viewBox="0 0 46 46"><circle cx="23" cy="23" r="21.500" fill="url(#zg)" stroke="#e8f1ff" stroke-width="2"/><path d="M10 16H28Q30 16 30 18V31H13Q10 31 10 28ZM31.500 20L37 16V31L31.500 27Z" fill="#fff"/></svg></div>
    <div class="app run"><svg viewBox="0 0 46 46"><circle cx="23" cy="23" r="22" fill="url(#pg)" stroke="#ddd" stroke-width="1.500"/><path d="M10 13L16 16Q23 14 30 16L36 13Q38 19 36 26Q33 32 27 33V45H19V39Q12 40 9 33Q14 38 19 34V33Q13 32 10 26Q8 19 10 13Z" fill="#f1f1f1"/></svg></div>
    <div class="app run double"><svg viewBox="0 0 46 46"><circle cx="23" cy="23" r="20.500" fill="url(#ag)" stroke="#d9eedd" stroke-width="1.800"/><g fill="none" stroke="#fff" stroke-width="1.500"><ellipse cx="23" cy="23" rx="5" ry="13" transform="rotate(-15 23 23)"/><ellipse cx="23" cy="23" rx="5" ry="13" transform="rotate(45 23 23)"/><ellipse cx="23" cy="23" rx="5" ry="13" transform="rotate(105 23 23)"/></g></svg></div>
    <div class="app run wide alert"><svg viewBox="0 0 50 46"><path d="M7 25L6 34L13 30Q30 33 35 19Q35 5 19 4Q3 5 2 18Q2 22 7 25Z" fill="#83db33"/><circle cx="13" cy="14" r="2.500" fill="#1e5a10"/><circle cx="25" cy="14" r="2.500" fill="#1e5a10"/><path d="M43 40L45 43L37 41Q21 41 20 30Q21 18 35 18Q48 19 49 30Q49 36 43 40Z" fill="#f1f4f4"/><circle cx="30" cy="27" r="2" fill="#888"/><circle cx="40" cy="27" r="2" fill="#888"/></svg></div>
    <div class="tray">
      <svg class="people" viewBox="0 0 30 32"><g fill="none" stroke="#fff" stroke-width="2"><circle cx="21" cy="7" r="6"/><path d="M13 17Q16 13 21 13Q28 14 29 19"/><circle cx="9" cy="18" r="5.500"/><path d="M1 31Q2 24 9 24T17 31"/></g></svg>
      <svg class="up" viewBox="0 0 28 16"><path d="M1 15L14 2L27 15" fill="none" stroke="#fff" stroke-width="2"/></svg>
      <svg class="pen" viewBox="0 0 34 34"><path d="M9 28L22 3Q25 0 28 4L15 30L9 32ZM11 20Q2 21 1 28Q3 33 9 31M24 15H31Q33 18 29 20L21 22M17 9L13 16" fill="none" stroke="#fff" stroke-width="2"/></svg>
      <span class="ime">英</span><span class="mode">M</span>
      <span class="clock">20:46<br>2018-10-8</span>
      <svg class="note" viewBox="0 0 34 34"><path d="M1 1H33V26H22L17 32L12 26H1Z" fill="none" stroke="#fff" stroke-width="2.200"/></svg>
      <i class="desk"></i>
    </div>
  </footer>
</div>
</body>
</html>
```

FILE: styles.css
```css
* { box-sizing: border-box; }
body { margin: 0; font-family: "Open Sans", "Noto Sans CJK SC", sans-serif; text-spacing-trim: space-all; text-autospace: no-autospace; color: #222; }
svg { display: block; flex: none; }
.defs { position: absolute; }
.screen { width: 2736px; height: 1824px; overflow: hidden; display: flex; flex-direction: column; background: #f2f2f2; }

/* tab strip */
.tabs { height: 57px; flex: none; display: flex; background: #ccc; padding-left: 12px; box-shadow: inset 0 -2px #a0a0a0; }
.tab { position: relative; width: 306px; height: 57px; margin-right: -26.5px; flex: none; display: flex; align-items: center; padding: 0 39px 1px 27px; color: #000; }
.tab .shape { position: absolute; left: 0; top: 0; width: 306px; height: 57px; fill: #d0d0d0; }
.tab:not(.active) { box-shadow: inset 0 -2px #a0a0a0; }
.tab.active { z-index: 2; }
.tab.active .shape { fill: #f2f2f2; }
.tab > :not(.shape) { position: relative; }
.fav { width: 32px; height: 32px; margin-right: 13px; flex: none; }
.wiki { background: #fff; border-radius: 6px; font: 30px/32px "Liberation Serif", serif; text-align: center; letter-spacing: -2px; }
.label { width: 163px; flex: none; font-size: 24px; line-height: 36px; white-space: nowrap; overflow: hidden; }
.fade { -webkit-mask-image: linear-gradient(90deg, #000 calc(100% - 50px), transparent); mask-image: linear-gradient(90deg, #000 calc(100% - 50px), transparent); }
.close { width: 18px; height: 18px; margin-left: 16px; }
.newtab { width: 68px; height: 34px; margin: 13px 0 0 18px; }
.window { margin-left: auto; padding-right: 35px; display: flex; align-items: center; height: 53px; }
.window svg { width: 22px; height: 22px; margin-left: 69px; fill: none; stroke: #000; stroke-width: 2; }
.window .profile + svg { margin-left: 58px; }
.profile { color: #fff; font-size: 26px; letter-spacing: -.3px; text-shadow: 0 0 4px #333, 0 1px 4px #333, 0 0 2px #444; }

/* toolbar */
.toolbar { height: 66px; flex: none; display: flex; padding-top: 9px; }
.nav { width: 185px; display: flex; gap: 28px; padding: 13px 0 0 22px; }
.nav svg { width: 28px; height: 28px; fill: none; stroke-width: 3; }
.omnibox { width: 1910px; height: 54px; background: #fff; border: 2px solid #acacac; border-radius: 4px; display: flex; align-items: center; padding: 0 11px 0 17px; font-size: 28px; white-space: nowrap; }
.lock { width: 16px; height: 22px; }
.secure { color: #188038; margin-left: 18px; padding-right: 14px; border-right: 1px solid #b0b0b0; line-height: 32px; }
.url { color: #808080; margin-left: 19px; margin-top: -2px; letter-spacing: .5px; }
.url b { color: #188038; font-weight: 400; }
.url i { color: #000; font-style: normal; }
.url span { letter-spacing: 0; }
.star { width: 30px; height: 30px; margin-left: auto; }
.exts { display: flex; gap: 31.8px; padding: 11px 0 0 16px; }
.exts > svg, .tree svg { width: 32px; height: 32px; }
.tree { position: relative; width: 32px; }
.tree span { position: absolute; left: 20px; top: 20px; width: 24px; height: 24px; border-radius: 3px; background: #3367d6; color: #fff; font-size: 20px; line-height: 24px; text-align: center; }
.shield { font-size: 17px; fill: #aaa; text-anchor: middle; }

/* bookmarks */
.bookmarks { height: 62px; flex: none; display: flex; align-items: center; padding: 3px 0 0 23px; border-bottom: 2px solid #b8b8b8; color: #000; font-size: 24px; white-space: nowrap; }
.bm { width: 300px; flex: none; display: flex; align-items: center; gap: 24px; }
.bm > svg { width: 32px; height: 32px; }
.bm.apps { width: 125px; gap: 26px; }
.bm.apps svg { width: 27px; height: 27px; }
.bm.short { width: 150px; }
.bm.mid { width: 272px; }
.bm.last { width: 300px; }
.bm > span:last-child { width: 221px; overflow: hidden; line-height: 34px; flex: none; }
.bm.apps > span, .bm.short > span { width: auto !important; }
.sq { width: 32px; height: 32px; border-radius: 3px; color: #fff; font-size: 25px; line-height: 31px; text-align: center; font-weight: 700; }
.pink { background: #f02463; }
.teal { background: #1fa79b; }
.gold { background: linear-gradient(#ffe060, #ffb90f 60%); border: 1px solid #f5a800; border-radius: 6px; color: #d3281c; font-size: 20px; }
.more { font-size: 30px; line-height: 36px; color: #555; margin-left: 12px; margin-top: -6px; }

/* page */
.viewport { position: relative; height: 1462px; flex: none; display: flex; overflow: hidden; background: #fff; }
.margin { width: 352px; flex: none; background: #f6f6f6; }
.article { flex: 1; height: 1600px; margin-top: -21px; padding: 0 48px; border-left: 2px solid #a7d7f9; font-size: 30px; line-height: 48px; white-space: nowrap; }
.article p { margin: 0 0 15px; }
.article a { color: #0645ad; }
.article a.new { color: #ba0000; }
.article q { quotes: none; font-family: "Noto Sans CJK SC", sans-serif; line-height: 0; }
.article q::before, .article q::after { content: none; }
.article sup { font-size: 25.8px; line-height: 0; color: #0645ad; vertical-align: 12px; }
.article h3 { margin: 0 0 14px; padding-top: 18px; font-size: 36px; line-height: 57.6px; color: #000; }
.article h3.next { font-size: 42px; padding-top: 28px; }
.edit { margin-left: 26px; font-size: 26px; font-weight: 400; color: #54595d; line-height: 1; }
.thumb { width: 460px; margin: 14px 0 0; border: 2px solid #c8ccd1; background: #f8f9fa; padding: 6px; }
.thumb.right { float: right; margin-bottom: 13px; }
.thumb.left { float: left; margin: 14px 42px 13px 0; }
.plate { border: 2px solid #c8ccd1; width: 444px; background: #fdfdfd; }
.motor { height: 934px; background: #fff; }
.system { height: 692px; }
figcaption { display: flex; justify-content: space-between; padding: 7px 10px 9px 6px; font-size: 26.6px; line-height: 37px; height: 86px; }
.right figcaption { height: 49px; }
figcaption svg { width: 22px; height: 16px; }
.italic { font: italic bold 26px "Liberation Serif", serif; fill: #333; }
.roman { font: italic bold 64px "Liberation Serif", serif; fill: #1a1a1a; text-anchor: middle; letter-spacing: 8px; }
.scroll { width: 34px; flex: none; background: #f1f1f1; display: flex; flex-direction: column; align-items: center; padding: 15px 0; }
.scroll svg { width: 14px; height: 8px; fill: #505050; }
.thumbbar { width: 30px; height: 149px; background: #c1c1c1; margin: 304px 0 auto; }
.ball { position: absolute; left: -57px; top: 1055px; width: 96px; height: 97px; border-radius: 50%; border: 5px solid #eee; background: linear-gradient(#9be8a0, #52d362 40%, #43c95a); box-shadow: 0 0 0 1px #aaa, 3px 9px 16px rgba(0,0,0,.4), inset 0 0 0 2px #178c53; color: #fff; font: bold 20px/84px "DejaVu Sans", sans-serif; text-align: right; padding-right: 5px; }

/* download shelf */
.shelf { height: 98px; flex: none; display: flex; align-items: center; border-top: 2px solid #d3d3d3; background: #f2f2f2; color: #000; padding-right: 25px; margin-top: -1px; position: relative; }
.download { height: 73px; width: 461px; display: flex; align-items: center; border-right: 2px solid #c6c6c6; padding-left: 44px; font-size: 27.8px; }
.doc { width: 22px; height: 29px; margin: -3px 32px 0 0; }
.download span { width: 306px; padding-top: 4px; white-space: nowrap; }
.caret { width: 20px; height: 12px; }
.shelf button { margin: -4px 25px 0 auto; width: 161px; height: 56px; border: 2px solid #777; border-radius: 5px; background: #fff; font: 24px "Open Sans", "Noto Sans CJK SC", sans-serif; color: #000; padding: 0; }
.shut { width: 22px; height: 22px; color: #4a4a4a; margin-top: -4px; }

/* taskbar */
.taskbar { height: 80px; flex: none; display: flex; background: #0a0a0a; color: #fff; }
.start { width: 96px; display: flex; align-items: center; justify-content: center; }
.start svg { width: 32px; height: 32px; }
.start + .app { margin-left: 6px; }
.app { width: 96px; margin-right: 2px; display: flex; align-items: center; justify-content: center; padding-bottom: 1px; background: linear-gradient(#76b9ed, #76b9ed) no-repeat center bottom / 0 4px; }
.app svg { width: 46px; height: 46px; }
.run { background-size: 80px 4px; }
.wide { background-size: 96px 4px; }
.current { background-color: #333; }
.double { background-image: linear-gradient(90deg, #76b9ed 62px, #4a7597 62px); }
.alert { background-color: #a35417; background-image: linear-gradient(#ff7a00, #ff7a00); }
.tray { margin-left: auto; display: flex; align-items: center; }
.people { width: 30px; height: 32px; }
.up { width: 28px; height: 16px; margin-left: 50px; }
.pen { width: 34px; height: 34px; margin-left: 42px; }
.ime { font-size: 30px; line-height: 40px; margin-left: 29px; }
.mode { width: 30px; height: 30px; margin-left: 28px; background: #fff; color: #0a0a0a; font-size: 28px; line-height: 30px; text-align: center; }
.clock { width: 120px; margin-left: 34px; font-size: 25px; line-height: 37px; text-align: center; white-space: nowrap; }
.note { width: 34px; height: 34px; margin-left: 36px; }
.desk { width: 2px; height: 80px; background: #777; margin: 0 8px 0 39px; }
```
